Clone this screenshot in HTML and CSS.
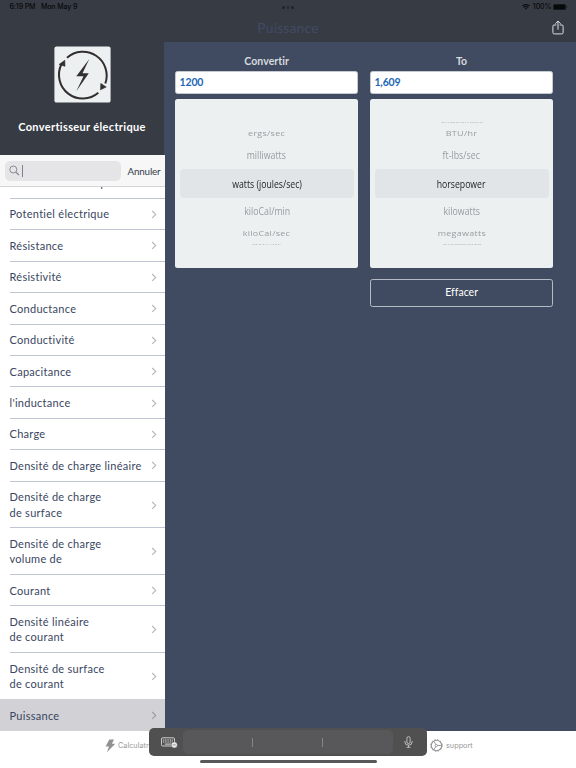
FILE: index.html
```html
<!DOCTYPE html>
<html lang="fr">
<head>
<meta charset="utf-8">
<title>Convertisseur électrique</title>
<link rel="stylesheet" href="styles.css">
</head>
<body>
<svg width="0" height="0" class="defs"><symbol id="chev" viewBox="0 0 6 9"><path d="M1.2 1 4.7 4.4 1.2 7.8" fill="none" stroke="#b4b5b9" stroke-width="1.1"/></symbol></svg>
<header class="top">
  <div class="status">
    <span class="time">6:19 PM</span><span class="date">Mon May 9</span>
    <span class="dots"><i></i><i></i><i></i></span>
    <svg class="wifi" width="8" height="6" viewBox="0 0 8 6"><path d="M.4 2.2Q4-1.1 7.6 2.2M1.7 3.5Q4 1.6 6.3 3.5" fill="none" stroke="#0b0c0e" stroke-width="1.1"/><path d="M2.8 4.5Q4 3.6 5.2 4.5L4 5.8Z" fill="#0b0c0e"/></svg>
    <span class="pct">100%</span>
    <svg class="batt" width="15" height="6" viewBox="0 0 15 6"><rect x=".3" y=".3" width="12.4" height="5.4" rx="1.5" fill="#08090a" stroke="#1d2024" stroke-width=".5"/><path d="M13.500 2v2q1-.2 1-1t-1-1" fill="#1d2024"/></svg>
  </div>
  <div class="nav">
    <h1>Puissance</h1>
    <svg class="share" width="12" height="15" viewBox="0 0 12 15"><path d="M4 5H2Q.9 5 .9 6.200V12.600Q.9 13.900 2.200 13.900H9.800Q11.100 13.900 11.100 12.600V6.200Q11.100 5 10 5H8M6 9.300V1.300M3.600 3.500 6 1.100 8.400 3.500" fill="none" stroke="#e4e5e7" stroke-width=".95" stroke-linecap="round" stroke-linejoin="round"/></svg>
  </div>
</header>
<div class="body">
  <aside class="side">
    <div class="brand">
      <svg class="logo" width="57" height="57" viewBox="0 0 57 57"><rect x=".4" y=".4" width="56.200" height="56.200" rx="2.200" fill="#ecf0f1"/><g fill="none" stroke="#332f30" stroke-width="2"><path d="M13 11.800A23.800 23.800 0 0 1 51.300 37.500"/><path d="M44.300 46.800A23.800 23.800 0 0 1 7.400 18.300"/></g><path d="M10.800 14.300 5 18.500 11 20.300ZM52.200 41 46.500 43.800 46.800 37.400Z" fill="#332f30" stroke="#332f30" stroke-width=".6"/><path d="M35.300 13 22.300 30.200H29.500L22.300 45.200 34.800 27.200H28.500Z" fill="#332f30"/></svg>
      <div class="name">Convertisseur électrique</div>
    </div>
    <div class="search">
      <div class="field"><svg width="11" height="11" viewBox="0 0 11 11"><circle cx="4.300" cy="4.500" r="3.500" fill="none" stroke="#808186" stroke-width=".9"/><path d="M6.900 7.100 9.900 10" stroke="#808186" stroke-width="1.100"/></svg><i class="caret"></i></div>
      <span class="cancel">Annuler</span>
    </div>
    <ul class="list">
      <li class="clip"><span>Résistivité électrique</span></li>
      <li><span>Potentiel électrique</span><svg><use href="#chev"/></svg></li>
      <li><span>Résistance</span><svg><use href="#chev"/></svg></li>
      <li><span>Résistivité</span><svg><use href="#chev"/></svg></li>
      <li><span>Conductance</span><svg><use href="#chev"/></svg></li>
      <li><span>Conductivité</span><svg><use href="#chev"/></svg></li>
      <li><span>Capacitance</span><svg><use href="#chev"/></svg></li>
      <li><span>l'inductance</span><svg><use href="#chev"/></svg></li>
      <li><span>Charge</span><svg><use href="#chev"/></svg></li>
      <li><span>Densité de charge linéaire</span><svg><use href="#chev"/></svg></li>
      <li class="two"><span>Densité de charge<br>de surface</span><svg><use href="#chev"/></svg></li>
      <li class="two"><span>Densité de charge<br>volume de</span><svg><use href="#chev"/></svg></li>
      <li><span>Courant</span><svg><use href="#chev"/></svg></li>
      <li class="two"><span>Densité linéaire<br>de courant</span><svg><use href="#chev"/></svg></li>
      <li class="two last"><span>Densité de surface<br>de courant</span><svg><use href="#chev"/></svg></li>
      <li class="on"><span>Puissance</span><svg><use href="#chev"/></svg></li>
    </ul>
  </aside>
  <main class="main">
    <section class="col">
      <h2>Convertir</h2>
      <div class="value">1200</div>
      <div class="picker">
        <div class="edge"></div>
        <div class="far"><span>ergs/sec</span></div>
        <div class="near"><span>milliwatts</span></div>
        <div class="sel"><span>watts (joules/sec)</span></div>
        <div class="near"><span>kiloCal/min</span></div>
        <div class="far"><span>kiloCal/sec</span></div>
        <div class="edge"><span>BTU/hr</span></div>
      </div>
    </section>
    <section class="col">
      <h2>To</h2>
      <div class="value">1,609</div>
      <div class="picker">
        <div class="edge"><span>kilocal/sec</span></div>
        <div class="far"><span>BTU/hr</span></div>
        <div class="near"><span>ft-lbs/sec</span></div>
        <div class="sel"><span>horsepower</span></div>
        <div class="near"><span>kilowatts</span></div>
        <div class="far"><span>megawatts</span></div>
        <div class="edge"><span>gigawatts</span></div>
      </div>
      <div class="clear">Effacer</div>
    </section>
  </main>
</div>
<footer class="tabs">
  <div class="tab calc"><svg width="11" height="14" viewBox="0 0 11 14"><path d="M4.300.5H9L6.900 4.800H10.300L1.900 13.300 4 7.600H.6Z" fill="#919191"/></svg><span>Calculatrice</span></div>
  <div class="tab sup"><svg width="13" height="13" viewBox="0 0 13 13" fill="none" stroke="#939393"><circle cx="6.500" cy="6.500" r="5.200" stroke-width="1.100"/><circle cx="6.500" cy="6.500" r="5.800" stroke-width=".9" stroke-dasharray="1.500 1.537"/><circle cx="6.300" cy="6.500" r="1.200" stroke-width=".9"/><path d="M7.500 6.500H11.600M5.700 5.400 3.800 2.200M5.700 7.600 3.800 10.800" stroke-width=".9"/></svg><span>support</span></div>
</footer>
<div class="kbd">
  <svg class="keys" width="17" height="11" viewBox="0 0 17 11"><rect x=".5" y=".8" width="13" height="8.200" rx="1.200" fill="none" stroke="#dcdcdc" stroke-width=".9"/><path d="M2 3H12.300M2 5H12.300" stroke="#dcdcdc" stroke-width="1.100" stroke-dasharray="1.100 .65"/><path d="M3.800 7.100H10.500" stroke="#dcdcdc"/><circle cx="13.300" cy="7.900" r="3" fill="#eee" stroke="#515153" stroke-width=".4"/><path d="M11.700 7.900H14.900" stroke="#777" stroke-width=".7"/></svg>
  <div class="sugg"><i></i><i></i></div>
  <svg class="mic" width="9" height="12" viewBox="0 0 9 12" fill="none" stroke="#d0d0d0" stroke-width=".85"><rect x="2.900" y=".6" width="3.200" height="7" rx="1.600"/><path d="M.9 5V6Q.9 9.200 4.500 9.200T8.100 6V5M4.500 9.200V11.300M2.600 11.300H6.400"/></svg>
</div>
<div class="home"></div>
</body>
</html>
```

FILE: styles.css
```css
* { box-sizing: border-box; }
body { margin: 0; width: 576px; height: 768px; overflow: hidden; background: #fff; font-family: Lato, "Liberation Sans", sans-serif; display: flex; flex-direction: column; position: relative; }
h1, h2, ul { margin: 0; padding: 0; font-weight: 400; }
svg { display: block; flex: none; }
.defs { position: absolute; }
.top { height: 42px; flex: none; background: #373b44; }
.status { height: 14px; display: flex; align-items: center; padding: 0 8.500px 0 9.500px; font: 500 7px/14px Inter, sans-serif; color: #08090b; position: relative; }
.date { margin-left: 5.500px; }
.time, .date, .pct { letter-spacing: -.05px; white-space: nowrap; }
.time, .date { letter-spacing: -.1px; }
.dots { position: absolute; left: 282px; top: 6px; display: flex; gap: 2px; }
.dots i { width: 2.600px; height: 2.600px; border-radius: 50%; background: #22252b; }
.wifi { margin-left: auto; }
.pct { margin: 0 1px 0 3px; }
.nav { height: 28px; display: flex; align-items: center; justify-content: center; position: relative; }
.nav h1 { font-size: 13.800px; line-height: 28px; letter-spacing: .2px; color: #414b65; }
.share { position: absolute; right: 12.500px; top: 6px; }
.body { height: 689px; flex: none; display: flex; }
.side { width: 165px; flex: none; display: flex; flex-direction: column; background: #fff; }
.brand { height: 113px; flex: none; background: #373b44; width: 165px; border-right: 1px solid #404a60; padding-top: 4px; display: flex; flex-direction: column; align-items: center; }
.name { color: #fff; font-size: 11px; line-height: 14px; font-weight: 700; letter-spacing: .34px; margin-top: 17px; white-space: nowrap; }
.search { height: 32px; flex: none; background: #f7f7f7; border-bottom: 1px solid #d5d5d8; display: flex; align-items: center; padding-left: 5px; }
.field { width: 116px; height: 20px; border-radius: 5px; background: #e5e5e7; display: flex; align-items: center; padding-left: 4px; }
.caret { width: 1px; height: 12px; background: #808188; margin-left: 2px; }
.cancel { font-size: 9.800px; letter-spacing: -.15px; color: #353b4b; margin-left: 6.500px; }
.list { list-style: none; height: 544px; overflow: hidden; }
.list li { height: 31.450px; margin-left: 9.500px; padding-right: 8.500px; border-bottom: 1px solid #bfc4d2; display: flex; align-items: center; justify-content: space-between; font-size: 11px; line-height: 15.300px; letter-spacing: .28px; color: #3a4661; white-space: nowrap; }
.list svg { width: 6px; height: 9px; position: relative; top: .5px; }
.list .clip { margin-top: -19.700px; }
.list .two { height: 46.650px; }
.list .last { border-color: transparent; }
.list .on { background: #d1d1d6; margin-left: 0; padding-left: 9.500px; border: 0; height: 32px; margin-top: -.5px; }
.list .on svg { filter: brightness(.85); }
.main { flex: 1; background: #404a60; padding: 13px 0 0 10px; display: flex; gap: 11.500px; align-items: flex-start; }
.col { width: 183.400px; }
.col h2 { font-size: 10.500px; line-height: 13px; font-weight: 700; letter-spacing: .08px; text-align: center; color: #d7dadf; margin-bottom: 3px; }
.value { height: 23px; background: #fff; border: .5px solid #c5c9d0; border-radius: 2.500px; color: #1c66b5; font-weight: 700; font-size: 10.500px; line-height: 20.500px; padding-left: 3.500px; letter-spacing: -.15px; }
.picker { height: 169px; margin-top: 5px; background: #ecf0f1; border-radius: 2.500px; display: flex; flex-direction: column; align-items: center; font-family: "Open Sans", sans-serif; font-size: 10px; padding-top: 20px; white-space: nowrap; color: #989c9e; }
.picker div { display: flex; align-items: center; justify-content: center; }
.picker .edge { height: 6px; color: #b3b6b8; }
.picker .edge span { transform: scale(.88, .18); }
.picker .far { height: 15px; }
.picker .far span { transform: scale(.9, .7); font-weight: 500; letter-spacing: .3px; }
.picker .near { height: 29px; }
.picker .near span { transform: scale(.88, 1.050); }
.picker .sel { width: 174px; height: 29px; flex: none; background: #e1e5e8; border-radius: 4px; color: #222426; }
.picker .sel span { transform: scale(.87, 1.080); }
.picker .sel ~ div { position: relative; top: -1.500px; }
.clear { height: 28px; margin-top: 11px; border: 1px solid #b6bac4; border-radius: 2.500px; color: #fff; font-size: 10.500px; line-height: 24px; text-align: center; letter-spacing: .02px; }
.tabs { flex: 1; background: #fff; display: flex; align-items: flex-start; }
.tab { display: flex; align-items: center; gap: 3px; height: 29px; font: 7.300px/14px Inter, sans-serif; color: #999; }
.calc { margin-left: 105px; width: 325px; gap: 2px; }
.kbd { position: absolute; left: 149px; top: 728px; width: 278px; height: 28px; border-radius: 5px; background: #505051; display: flex; align-items: center; }
.keys { margin-left: 12px; }
.sugg { width: 210px; height: 24px; margin-left: 4.500px; border-radius: 5px; background: #58585a; display: flex; justify-content: space-evenly; align-items: center; }
.sugg i { width: 1px; height: 9px; background: #858586; }
.mic { margin-left: 11.500px; }
.home { position: absolute; left: 199.500px; top: 760px; width: 177px; height: 3px; border-radius: 2px; background: #58585a; }
```
